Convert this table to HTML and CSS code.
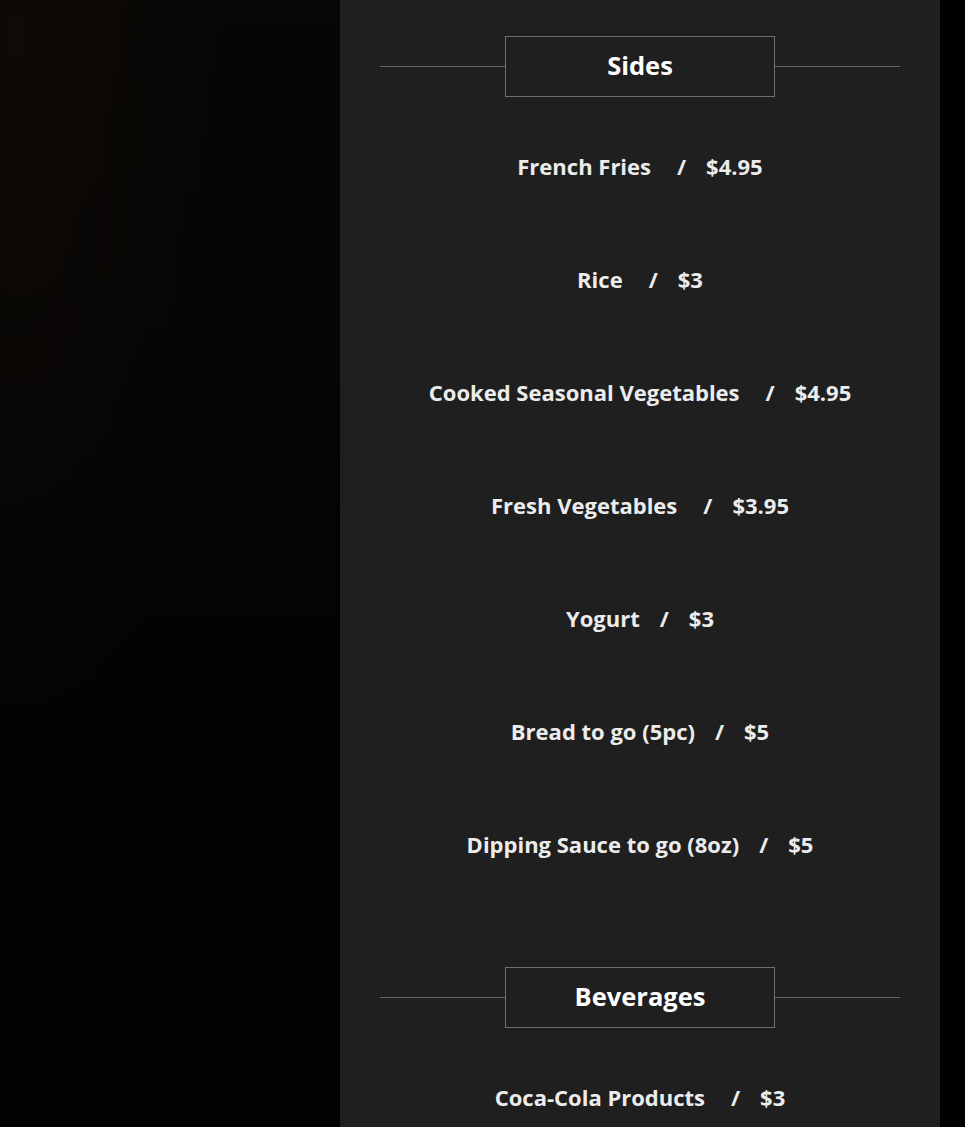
FILE: index.html
```html
<!DOCTYPE html>
<html lang="en">
<head>
  <meta charset="UTF-8" />
  <meta name="viewport" content="width=device-width, initial-scale=1.0"/>
  <title>Menu - Sides &amp; Beverages</title>
  <link rel="stylesheet" href="styles.css">
</head>
<body>

  <div class="page">
    <div class="backdrop"></div>

    <main class="menu">
      <section class="menu-section">
        <div class="section-title"><h2>Sides</h2></div>
        <p class="item"><span class="name wide">French Fries</span><span class="sep">/</span><span class="price">$4.95</span></p>
        <p class="item"><span class="name wide">Rice</span><span class="sep">/</span><span class="price">$3</span></p>
        <p class="item"><span class="name wide">Cooked Seasonal Vegetables</span><span class="sep">/</span><span class="price">$4.95</span></p>
        <p class="item"><span class="name wide">Fresh Vegetables</span><span class="sep">/</span><span class="price">$3.95</span></p>
        <p class="item"><span class="name">Yogurt</span><span class="sep">/</span><span class="price">$3</span></p>
        <p class="item"><span class="name">Bread to go (5pc)</span><span class="sep">/</span><span class="price">$5</span></p>
        <p class="item"><span class="name">Dipping Sauce to go (8oz)</span><span class="sep">/</span><span class="price">$5</span></p>
      </section>

      <section class="menu-section">
        <div class="section-title"><h2>Beverages</h2></div>
        <p class="item"><span class="name wide">Coca-Cola Products</span><span class="sep">/</span><span class="price">$3</span></p>
      </section>
    </main>

    <div class="edge"></div>
  </div>

</body>
</html>
```

FILE: styles.css
```css
html, body {
  margin: 0;
  height: 100%;
  background: #000;
}
body {
  font-family: "Open Sans", Arial, sans-serif;
  color: #eee;
  overflow: hidden;
}
.page {
  display: grid;
  grid-template-columns: 340px 600px 1fr;
  height: 100vh;
  overflow: hidden;
}
.backdrop {
  background:
    radial-gradient(ellipse at 5% 3%, rgba(30, 20, 10, 0.3), transparent 45%),
    linear-gradient(180deg, #070605 0%, #040404 45%, #010204 75%, #010103 100%);
}
.edge {
  background: #000;
}
.menu {
  background: #1f1f1f;
  padding: 36px 40px 0;
}
.menu-section {
  display: flow-root;
}
.menu-section + .menu-section {
  margin-top: 25px;
}
.section-title {
  display: flex;
  align-items: center;
  margin-bottom: 54px;
}
.section-title::before,
.section-title::after {
  content: "";
  flex: 1;
  height: 1px;
  background: #666;
}
.section-title h2 {
  box-sizing: border-box;
  width: 270px;
  height: 61px;
  margin: 0;
  border: 1px solid #6e6e6e;
  font-size: 25.5px;
  font-weight: 700;
  line-height: 57px;
  text-align: center;
  color: #fff;
}
.item {
  margin: 0 0 83px;
  line-height: 30px;
  font-size: 22px;
  font-weight: 700;
  text-align: center;
  color: #ececec;
}
.name.wide {
  margin-right: 6px;
}
.sep {
  margin: 0 20px;
}
```
